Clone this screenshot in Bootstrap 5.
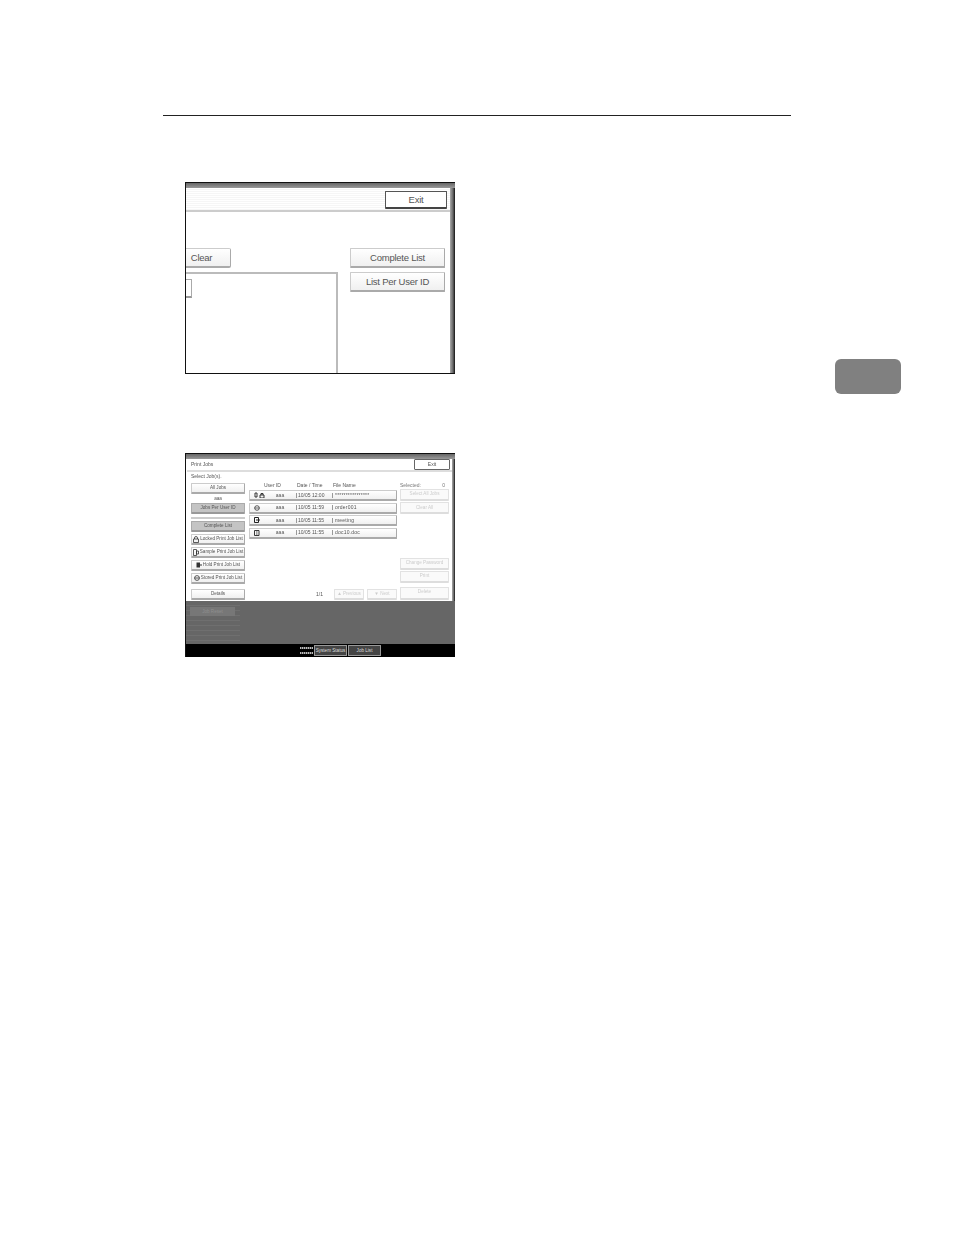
<!DOCTYPE html>
<html lang="en">
<head>
<meta charset="utf-8">
<title>Print Jobs</title>
<link href="https://cdn.jsdelivr.net/npm/bootstrap@5.3.0/dist/css/bootstrap.min.css" rel="stylesheet">
<style>
html,body{margin:0;height:100%;background:#fff;overflow:hidden}
.sheet{width:954px;height:1235px;padding-top:115px;font-family:"Liberation Sans",Arial,sans-serif;color:#333}
.rule{width:628px;height:1px;margin-left:163px;background:#222}
.shots{width:835px;flex:none}
.shot{width:270px;margin-left:185px;background:#fff;border:1px solid #111;border-right:0;overflow:hidden}
.shot-a{height:192px;margin-top:66px}
.shot-b{height:204px;margin-top:79px;border-bottom:0}
.topband{height:5px;background:linear-gradient(#666,#999)}
.rstrip{width:5px;background:linear-gradient(90deg,#aaa,#666 60%,#111);flex:none}
.rstrip-thin{width:3px}
.hw{border:1px solid #ccc;border-bottom:2px solid #aaa;border-right-color:#aaa;border-radius:1px;background:linear-gradient(#fff,#f0f0f0);display:flex;align-items:center;justify-content:center;color:#555;line-height:1;white-space:nowrap;overflow:hidden}
.a-body{height:186px}
.a-main{width:264px;min-width:0}
.a-head{height:24px;border-bottom:2px solid #ccc;padding:3px 3px 0 0;background:repeating-linear-gradient(#fff 0 1px,#f6f6f6 1px 2px);justify-content:flex-end}
.a-btn{font-size:9.5px;letter-spacing:-.25px;color:#555}
.a-exit{width:62px;height:18px;border:1px solid #555;border-bottom:2px solid #444;background:#fff}
.a-clear{width:45px;height:20px;padding-right:13px;border-left:0;border-radius:0 2px 2px 0;margin-top:36px}
.a-panel{width:152px;height:102px;margin-top:4px;border-top:2px solid #bbb;border-right:2px solid #bbb;padding-top:5px}
.a-stub{width:6px;height:19px;border:1px solid #aaa;border-left:0;border-bottom:2px solid #999}
.a-right{width:95px;margin:36px 0 0 12px}
.a-right .hw{height:20px;margin-bottom:4px}
.b-top{height:142px}
.b-panel{width:265px;margin-left:1px;filter:blur(.25px)}
.b-head{height:13px;border-bottom:2px solid #ddd;padding:0 2px 0 4px;font-size:5px}
.t5{font-size:5px;line-height:1;color:#555;white-space:nowrap}
.b-prompt{padding:2px 0 0 4px}
.b-exit{width:36px;height:11px;border:1px solid #666;background:#fff;font-size:5px}
.b-cols{padding:4px 3px 0 4px;gap:4px}
.col-l{width:54px}
.col-m{width:148px}
.col-r{width:49px;margin-left:-1px}
.bb{width:54px;height:11px;font-size:4.6px;margin-bottom:2px}
.bb.on{background:#c4c4c4;border-color:#aaa;border-bottom-color:#999}
.bb svg{margin-right:1px;flex:none}
.aaa{text-align:center;height:5px;padding-top:1px;font-size:4.6px;margin-bottom:2px}
.sep{height:2px;background:#ccc;margin:3px 0 2px}
.bb-gap{margin-top:5px;margin-bottom:0}
.thead{height:7px;padding-left:15px}
.thead span{display:inline-block}
.th1{width:33px}
.th2{width:36px}
.mrow{height:11px;margin-bottom:1.6px;justify-content:flex-start;padding:0;flex:none}
.mrow .c1{width:21px;display:flex;gap:1px;padding-left:4px;align-items:center}
.mrow .c2{width:18px;margin-right:7px;text-align:center}
.mrow .c3{width:36px;border-left:1px solid #999;padding-left:1px}
.mrow .c4{border-left:1px solid #999;padding-left:2px;letter-spacing:.2px}
.off{color:#ccc;border-color:#e2e2e2;background:#fafafa;border-bottom-color:#ddd;font-size:4.6px}
.rb{width:49px;height:12px;margin-bottom:1.4px;flex:none}
.rb-far{margin-top:42px}
.rb-del{height:13px;margin-top:2px;margin-bottom:0}
.selected{height:6px;color:#777}
.pager{margin-top:auto;gap:3px;align-items:center}
.pg{width:30px;height:11px}
.b-low{height:43px;background:#666}
.b-low-l{width:54px;background:repeating-linear-gradient(#666 0 4px,#6f6f6f 4px 5px);padding:6px 5px 0 4px}
.b-reset{height:9px;background:#777;color:#8f8f8f;font-size:4.6px;text-align:center;line-height:9px}
.b-foot{height:13px;background:#000;padding:1px 0 1px 114px;gap:1px;align-items:stretch}
.dots{width:13px;display:flex;flex-direction:column;justify-content:center;gap:3px}
.dots i{display:block;height:2px;background:repeating-linear-gradient(90deg,#bbb 0 1px,#555 1px 2px)}
.ft{width:33px;background:#444;border:1px solid #999;color:#ddd;font-size:4.6px;text-align:center;line-height:9px}
.tabmark{width:66px;height:35px;margin-top:243px;background:#808080;border-radius:6px;flex:none}
</style>
</head>
<body>
<main class="sheet">
  <div class="rule"></div>
  <div class="d-flex align-items-start">
    <div class="shots">
      <section class="shot shot-a">
        <div class="topband"></div>
        <div class="a-body d-flex">
          <div class="a-main">
            <div class="a-head d-flex">
              <div class="hw a-btn a-exit">Exit</div>
            </div>
            <div class="d-flex">
              <div>
                <div class="hw a-btn a-clear">Clear</div>
                <div class="a-panel"><div class="a-stub"></div></div>
              </div>
              <div class="a-right">
                <div class="hw a-btn">Complete List</div>
                <div class="hw a-btn">List Per User ID</div>
              </div>
            </div>
          </div>
          <div class="flex-grow-1"></div>
          <div class="rstrip"></div>
        </div>
      </section>

      <section class="shot shot-b">
        <div class="topband"></div>
        <div class="b-top d-flex">
          <div class="b-panel">
            <div class="b-head d-flex justify-content-between align-items-center">
              <span class="t5">Print Jobs</span>
              <div class="hw b-exit">Exit</div>
            </div>
            <div class="t5 b-prompt">Select Job(s).</div>
            <div class="b-cols d-flex">
              <div class="col-l">
                <div class="hw bb">All Jobs</div>
                <div class="t5 aaa">aaa</div>
                <div class="hw bb on">Jobs Per User ID</div>
                <div class="sep"></div>
                <div class="hw bb on">Complete List</div>
                <div class="hw bb"><svg width="6" height="7" viewBox="0 0 6 7"><path d="M1.500 3V2a1.500 1.500 0 0 1 3 0v1M.5 3h5v3.500h-5z" fill="none" stroke="#333" stroke-width=".8"/></svg>Locked Print Job List</div>
                <div class="hw bb"><svg width="6" height="7" viewBox="0 0 6 7"><path d="M.5.500h3v6h-3zM3.500 2h2v3h-2z" fill="none" stroke="#333" stroke-width=".8"/></svg>Sample Print Job List</div>
                <div class="hw bb"><svg width="6" height="6" viewBox="0 0 6 6"><path d="M.5.500h3.500v5H.5z" fill="#333"/><path d="M4 3h2" stroke="#333"/></svg>Hold Print Job List</div>
                <div class="hw bb"><svg width="6" height="6" viewBox="0 0 6 6"><circle cx="3" cy="3" r="2.400" fill="none" stroke="#333" stroke-width=".8"/><path d="M.5 3h5" stroke="#333" stroke-width=".8"/></svg>Stored Print Job List</div>
                <div class="hw bb bb-gap">Details</div>
              </div>
              <div class="col-m d-flex flex-column">
                <div class="t5 thead"><span class="th1">User ID</span><span class="th2">Date / Time</span><span>File Name</span></div>
                <div class="hw t5 mrow"><span class="c1"><svg width="11" height="6" viewBox="0 0 11 6"><path d="M1 1h2v4H1zM6 3h4v3H6zM7 3V1.500h2V3" fill="none" stroke="#222" stroke-width=".9"/></svg></span><span class="c2">aaa</span><span class="c3">10/05 12:00</span><span class="c4">****************</span></div>
                <div class="hw t5 mrow"><span class="c1"><svg width="6" height="6" viewBox="0 0 6 6"><circle cx="3" cy="3" r="2.300" fill="none" stroke="#333" stroke-width=".8"/><path d="M.5 3h5" stroke="#333" stroke-width=".7"/></svg></span><span class="c2">aaa</span><span class="c3">10/05 11:59</span><span class="c4">order001</span></div>
                <div class="hw t5 mrow"><span class="c1"><svg width="6" height="6" viewBox="0 0 6 6"><path d="M.5.500h4v5h-4z" fill="none" stroke="#222"/><path d="M2 3h4" stroke="#222"/></svg></span><span class="c2">aaa</span><span class="c3">10/05 11:55</span><span class="c4">meeting</span></div>
                <div class="hw t5 mrow"><span class="c1"><svg width="6" height="6" viewBox="0 0 6 6"><path d="M.5.500h4.500v5H.5z" fill="none" stroke="#222" stroke-width=".9"/><path d="M2 2h1.500M2 4h1.500" stroke="#222" stroke-width=".8"/></svg></span><span class="c2">aaa</span><span class="c3">10/05 11:55</span><span class="c4">doc10.doc</span></div>
                <div class="pager d-flex justify-content-end">
                  <span class="t5 me-2">1/1</span>
                  <div class="hw off pg">▲ Previous</div>
                  <div class="hw off pg">▼ Next</div>
                </div>
              </div>
              <div class="col-r d-flex flex-column">
                <div class="t5 selected d-flex justify-content-between pe-1"><span>Selected:</span><span>0</span></div>
                <div class="hw off rb">Select All Jobs</div>
                <div class="hw off rb">Clear All</div>
                <div class="hw off rb rb-far">Change Password</div>
                <div class="hw off rb">Print</div>
                <div class="hw off rb rb-del">Delete</div>
              </div>
            </div>
          </div>
          <div class="flex-grow-1"></div>
          <div class="rstrip rstrip-thin"></div>
        </div>
        <div class="b-low d-flex"><div class="b-low-l"><div class="b-reset">Job Reset</div></div></div>
        <div class="b-foot d-flex">
          <div class="dots"><i></i><i></i></div>
          <div class="ft">System Status</div>
          <div class="ft">Job List</div>
        </div>
      </section>
    </div>
    <div class="tabmark" aria-hidden="true"></div>
  </div>
</main>
<script src="https://cdn.jsdelivr.net/npm/bootstrap@5.3.0/dist/js/bootstrap.bundle.min.js"></script>
</body>
</html>
